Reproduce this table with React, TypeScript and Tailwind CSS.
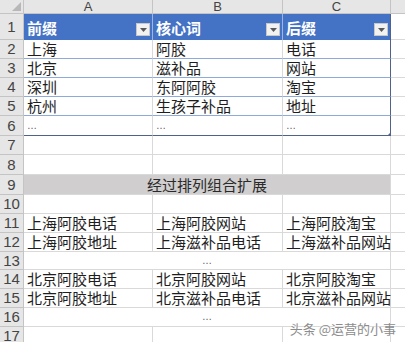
import React from "react";

const font = "font-['Noto_Sans_CJK_SC','Liberation_Sans',sans-serif]";
const colW = ["w-[129px]", "w-[130px]", "w-[108px]"];
const grid = "border-[#d9d9d9]";

const RowNum = ({ n }: { n: number }) => (
  <div className="w-[24px] shrink-0 bg-[#e6e6e6] border-r border-b border-[#c4c4c4] flex items-center justify-center text-[15px] leading-[16px] text-[#444] font-['Liberation_Sans',sans-serif]">
    {n}
  </div>
);

const Dots = () => (
  <span className="font-['Liberation_Sans',sans-serif] text-[10px] text-[#555] leading-[12px]">…</span>
);

const Dropdown = () => (
  <div className="w-[14px] h-[13px] mt-[5px] mr-[2px] shrink-0 bg-[#f2f2f2] border border-[#c8c8c8] flex items-center justify-center">
    <svg width="7" height="4" viewBox="0 0 7 4">
      <polygon points="0,0 7,0 3.5,4" fill="#595959" />
    </svg>
  </div>
);

// plain sheet row with three cells
const PlainRow = ({ n, h, cells }: { n: number; h: string; cells: React.ReactNode[] }) => (
  <div className={`flex ${h}`}>
    <RowNum n={n} />
    {cells.map((t, i) => (
      <div
        key={i}
        className={`${colW[i]} shrink-0 border-r border-b ${grid} flex items-center pl-[3px] whitespace-nowrap leading-[18px]`}
      >
        {t}
      </div>
    ))}
    <div className={`flex-1 border-b ${grid}`} />
  </div>
);

// A:C merged row
const MergedRow = ({ n, h, children, bg }: { n: number; h: string; children?: React.ReactNode; bg?: string }) => (
  <div className={`flex ${h}`}>
    <RowNum n={n} />
    <div className={`w-[367px] shrink-0 border-r border-b ${grid} ${bg ?? ""} flex items-center justify-center leading-[18px]`}>
      {children}
    </div>
    <div className={`flex-1 border-b ${grid}`} />
  </div>
);

// rows 2-6 of the formatted table
const TableRow = ({ n, h, cells, last }: { n: number; h: string; cells: React.ReactNode[]; last?: boolean }) => (
  <div className={`flex ${h}`}>
    <RowNum n={n} />
    {cells.map((t, i) => (
      <div
        key={i}
        className={`${colW[i]} shrink-0 relative border-b flex items-center pl-[3px] whitespace-nowrap leading-[18px] ${
          last ? "border-[#4f6289]" : "border-[#8eaadb]"
        } ${i === 2 ? "border-r border-r-[#4f6289]" : "border-r border-r-[#d9d9d9]"}`}
      >
        {t}
        {last && i === 2 && (
          <svg className="absolute right-[-1px] bottom-[-1px]" width="4" height="4" viewBox="0 0 4 4">
            <polygon points="4,0 4,4 0,4" fill="#4f6289" />
          </svg>
        )}
      </div>
    ))}
    <div className={`flex-1 border-b ${grid}`} />
  </div>
);

export default function App() {
  return (
    <div className={`relative w-[405px] h-[342px] overflow-hidden bg-white text-[15px] text-[#1e1e1e] ${font}`}>
      {/* column letters */}
      <div className="flex h-[14px] bg-[#e6e6e6] text-[13px] leading-[13px] text-[#444] font-['Liberation_Sans',sans-serif]">
        <div className="w-[24px] shrink-0 border-r border-b border-[#c4c4c4] relative">
          <svg className="absolute right-[2px] bottom-[2px]" width="9" height="9" viewBox="0 0 9 9">
            <polygon points="9,0 9,9 0,9" fill="#b8b8b8" />
          </svg>
        </div>
        {["A", "B", "C"].map((c, i) => (
          <div key={c} className={`${colW[i]} shrink-0 border-r border-b border-[#c4c4c4] flex items-center justify-center`}>
            {c}
          </div>
        ))}
        <div className="flex-1 border-b border-[#c4c4c4]" />
      </div>

      {/* row 1: table header */}
      <div className="flex h-[26px]">
        <RowNum n={1} />
        {["前缀", "核心词", "后缀"].map((t, i) => (
          <div
            key={t}
            className={`${colW[i]} shrink-0 bg-[#4472c4] border-r ${
              i === 2 ? "border-[#4f6289]" : "border-[#9db4e0]"
            } flex items-center justify-between pl-[3px] text-white font-bold`}
          >
            <span className="mt-[2px]">{t}</span>
            <Dropdown />
          </div>
        ))}
        <div className={`flex-1 border-b ${grid}`} />
      </div>

      <TableRow n={2} h="h-[19px]" cells={["上海", "阿胶", "电话"]} />
      <TableRow n={3} h="h-[19px]" cells={["北京", "滋补品", "网站"]} />
      <TableRow n={4} h="h-[19px]" cells={["深圳", "东阿阿胶", "淘宝"]} />
      <TableRow n={5} h="h-[19px]" cells={["杭州", "生孩子补品", "地址"]} />
      <TableRow n={6} h="h-[20px]" cells={[<Dots key="a" />, <Dots key="b" />, <Dots key="c" />]} last />

      <PlainRow n={7} h="h-[19px]" cells={["", "", ""]} />
      <PlainRow n={8} h="h-[20px]" cells={["", "", ""]} />
      <MergedRow n={9} h="h-[20px]" bg="bg-[#d0cece]">
        <span className="text-[#2a2a2a]">经过排列组合扩展</span>
      </MergedRow>
      <PlainRow n={10} h="h-[19px]" cells={["", "", ""]} />
      <PlainRow n={11} h="h-[19px]" cells={["上海阿胶电话", "上海阿胶网站", "上海阿胶淘宝"]} />
      <PlainRow n={12} h="h-[19px]" cells={["上海阿胶地址", "上海滋补品电话", "上海滋补品网站"]} />
      <MergedRow n={13} h="h-[18px]">
        <Dots />
      </MergedRow>
      <PlainRow n={14} h="h-[19px]" cells={["北京阿胶电话", "北京阿胶网站", "北京阿胶淘宝"]} />
      <PlainRow n={15} h="h-[19px]" cells={["北京阿胶地址", "北京滋补品电话", "北京滋补品网站"]} />
      <MergedRow n={16} h="h-[19px]">
        <Dots />
      </MergedRow>
      <PlainRow n={17} h="h-[19px]" cells={["", "", ""]} />

      {/* watermark */}
      <div className="absolute right-[9px] bottom-[7px] text-[13px] leading-none text-[#8c8c8c] [text-shadow:0_0_2px_#fff,0_0_1px_#fff]">
        头条 @运营的小事
      </div>
    </div>
  );
}
